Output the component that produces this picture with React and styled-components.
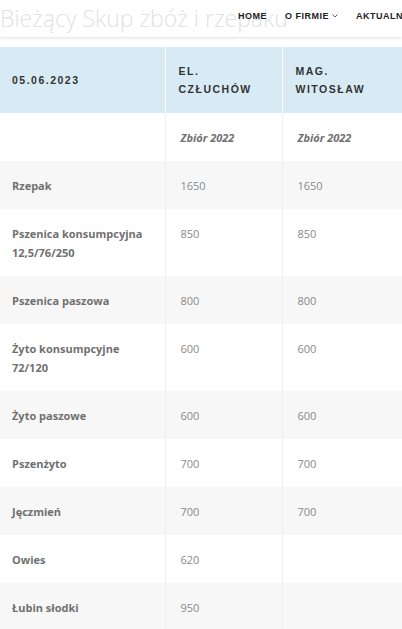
import React from "react";
import styled, { createGlobalStyle } from "styled-components";

const GlobalStyle = createGlobalStyle`
  html, body {
    margin: 0;
    padding: 0;
    background: #fff;
    overflow: hidden;
  }
  body {
    font-family: "Open Sans", "Liberation Sans", sans-serif;
  }
`;

const Page = styled.div`
  width: 402px;
  height: 629px;
  overflow: hidden;
  background: #fff;
`;

const Header = styled.header`
  position: relative;
  height: 37px;
  background: #fff;
  box-shadow: 0 1px 3px rgba(0, 0, 0, 0.12);
`;

const PageTitle = styled.h1`
  margin: 0;
  padding: 0;
  font-family: "Open Sans", sans-serif;
  font-weight: 300;
  font-size: 23px;
  line-height: 37px;
  letter-spacing: 0;
  color: #e2e2e2;
  white-space: nowrap;
`;

const Nav = styled.nav`
  position: absolute;
  top: 11px;
  left: 238px;
  display: flex;
  align-items: center;
  gap: 18px;
  white-space: nowrap;
`;

const NavItem = styled.a`
  display: flex;
  align-items: center;
  gap: 3px;
  font-family: "Liberation Sans", Arial, sans-serif;
  font-weight: 700;
  font-size: 9px;
  letter-spacing: 0.5px;
  color: #1e1e1e;
  text-decoration: none;
`;

const Table = styled.table`
  margin-top: 10px;
  width: 420px;
  border-collapse: collapse;
  table-layout: fixed;
`;

const HeadCell = styled.th`
  background: #d8ebf5;
  padding: 15px ${(p) => (p.$first ? "12px" : "13px")};
  height: 36px;
  text-align: left;
  font-family: "Liberation Sans", Arial, sans-serif;
  font-weight: 700;
  font-size: 10.5px;
  line-height: 18px;
  letter-spacing: 1.5px;
  color: #333;
  border-left: ${(p) => (p.$first ? "none" : "1px solid #fff")};
  vertical-align: middle;
`;

const Row = styled.tr`
  background: ${(p) => (p.$shade ? "#f7f7f7" : "#fff")};
`;

const Cell = styled.td`
  padding: 14.5px ${(p) => (p.$first ? "12px" : "15px")};
  font-family: "Open Sans", sans-serif;
  font-size: 11px;
  line-height: 19px;
  font-weight: ${(p) => (p.$label ? 700 : 400)};
  font-style: ${(p) => (p.$italic ? "italic" : "normal")};
  color: ${(p) => (p.$label ? "#707070" : "#8a8a8a")};
  border-left: ${(p) => (p.$first ? "none" : "1px solid #efefef")};
  vertical-align: top;
`;

const Chevron = () => (
  <svg width="6" height="4" viewBox="0 0 6 4" fill="none">
    <path d="M0.5 0.5 L3 3 L5.5 0.5" stroke="#555" strokeWidth="0.9" />
  </svg>
);

const rows = [
  { name: ["Rzepak"], a: "1650", b: "1650" },
  { name: ["Pszenica konsumpcyjna", "12,5/76/250"], a: "850", b: "850" },
  { name: ["Pszenica paszowa"], a: "800", b: "800" },
  { name: ["Żyto konsumpcyjne", "72/120"], a: "600", b: "600" },
  { name: ["Żyto paszowe"], a: "600", b: "600" },
  { name: ["Pszenżyto"], a: "700", b: "700" },
  { name: ["Jęczmień"], a: "700", b: "700" },
  { name: ["Owies"], a: "620", b: "" },
  { name: ["Łubin słodki"], a: "950", b: "" },
];

export default function App() {
  return (
    <Page>
      <GlobalStyle />
      <Header>
        <PageTitle>Bieżący Skup zbóż i rzepaku</PageTitle>
        <Nav>
          <NavItem>HOME</NavItem>
          <NavItem>
            O FIRMIE <Chevron />
          </NavItem>
          <NavItem>AKTUALNOŚCI</NavItem>
        </Nav>
      </Header>
      <Table>
        <colgroup>
          <col style={{ width: 165 }} />
          <col style={{ width: 117 }} />
          <col />
        </colgroup>
        <thead>
          <tr>
            <HeadCell $first>05.06.2023</HeadCell>
            <HeadCell>
              EL.
              <br />
              CZŁUCHÓW
            </HeadCell>
            <HeadCell>
              MAG.
              <br />
              WITOSŁAW
            </HeadCell>
          </tr>
        </thead>
        <tbody>
          <Row>
            <Cell $first $label />
            <Cell $label $italic>Zbiór 2022</Cell>
            <Cell $label $italic>Zbiór 2022</Cell>
          </Row>
          {rows.map((r, i) => (
            <Row key={r.name[0]} $shade={i % 2 === 0}>
              <Cell $first $label>
                {r.name.map((n, j) => (
                  <React.Fragment key={n}>
                    {j > 0 && <br />}
                    {n}
                  </React.Fragment>
                ))}
              </Cell>
              <Cell>{r.a}</Cell>
              <Cell>{r.b}</Cell>
            </Row>
          ))}
        </tbody>
      </Table>
    </Page>
  );
}
